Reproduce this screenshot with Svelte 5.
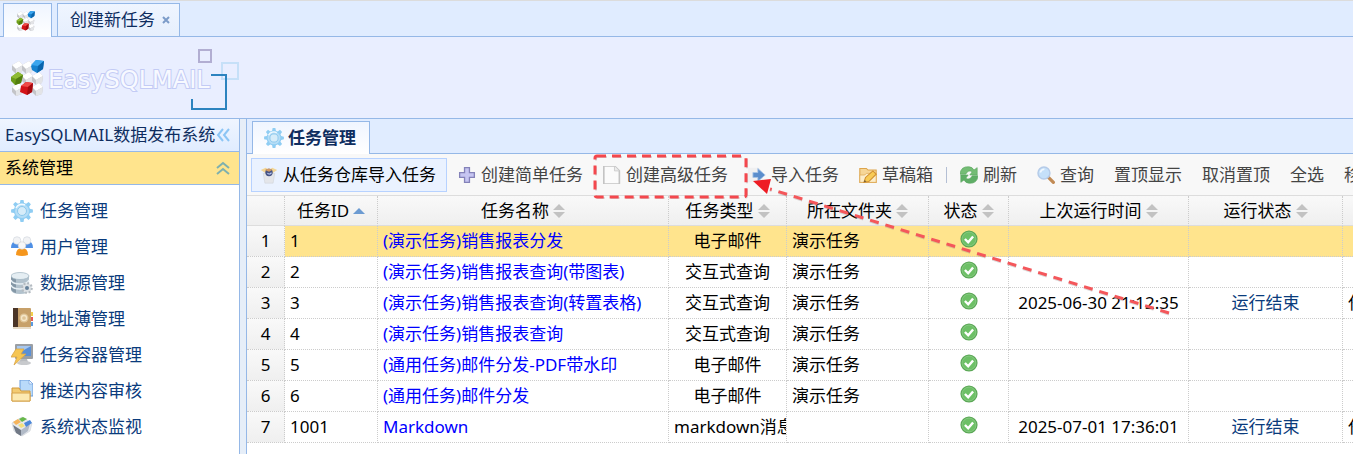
<script lang="ts">
	interface NavItem {
		label: string;
		icon: string;
		href: string;
	}

	interface ToolItem {
		label: string;
		icon?: string;
		raised?: boolean;
		separator?: boolean; // 按钮后面的分隔线
	}

	interface Column {
		title: string;
		width: number;
		sort?: 'asc' | 'both';
	}

	interface Task {
		id: number;
		name: string;
		type: string;
		folder: string;
		lastRun?: string;
		result?: string;
		message?: string;
	}

	// 徽标中的灰色方块
	const cubes = [
		{ x: 1, y: 1 },
		{ x: 11, y: 1 },
		{ x: 11, y: 12 },
		{ x: 21, y: 12 },
		{ x: 1, y: 23 },
		{ x: 21, y: 23 }
	];

	const navItems: NavItem[] = [
		{ label: '任务管理', icon: 'gear', href: '#tasks' },
		{ label: '用户管理', icon: 'users', href: '#users' },
		{ label: '数据源管理', icon: 'database', href: '#sources' },
		{ label: '地址薄管理', icon: 'book', href: '#contacts' },
		{ label: '任务容器管理', icon: 'container', href: '#containers' },
		{ label: '推送内容审核', icon: 'folder', href: '#review' },
		{ label: '系统状态监视', icon: 'monitor', href: '#status' }
	];

	const tools: ToolItem[] = [
		{ label: '从任务仓库导入任务', icon: 'store', raised: true },
		{ label: '创建简单任务', icon: 'plus' },
		{ label: '创建高级任务', icon: 'page' },
		{ label: '导入任务', icon: 'import' },
		{ label: '草稿箱', icon: 'draft', separator: true },
		{ label: '刷新', icon: 'refresh' },
		{ label: '查询', icon: 'search' },
		{ label: '置顶显示' },
		{ label: '取消置顶' },
		{ label: '全选' },
		{ label: '移动' }
	];

	const columns: Column[] = [
		{ title: '', width: 38 },
		{ title: '任务ID', width: 93, sort: 'asc' },
		{ title: '任务名称', width: 291, sort: 'both' },
		{ title: '任务类型', width: 118, sort: 'both' },
		{ title: '所在文件夹', width: 142, sort: 'both' },
		{ title: '状态', width: 80, sort: 'both' },
		{ title: '上次运行时间', width: 180, sort: 'both' },
		{ title: '运行状态', width: 154, sort: 'both' },
		{ title: '', width: 240 }
	];

	const tasks: Task[] = [
		{ id: 1, name: '(演示任务)销售报表分发', type: '电子邮件', folder: '演示任务' },
		{ id: 2, name: '(演示任务)销售报表查询(带图表)', type: '交互式查询', folder: '演示任务' },
		{
			id: 3,
			name: '(演示任务)销售报表查询(转置表格)',
			type: '交互式查询',
			folder: '演示任务',
			lastRun: '2025-06-30 21:12:35',
			result: '运行结束',
			message: '任'
		},
		{ id: 4, name: '(演示任务)销售报表查询', type: '交互式查询', folder: '演示任务' },
		{ id: 5, name: '(通用任务)邮件分发-PDF带水印', type: '电子邮件', folder: '演示任务' },
		{ id: 6, name: '(通用任务)邮件分发', type: '电子邮件', folder: '演示任务' },
		{
			id: 1001,
			name: 'Markdown',
			type: 'markdown消息',
			folder: '',
			lastRun: '2025-07-01 17:36:01',
			result: '运行结束',
			message: '任'
		}
	];

	// 当前选中的行
	let selectedId = $state(1);
</script>

{#snippet logo(size: number)}
	<svg width={size} height={size} viewBox="0 0 34 36" aria-hidden="true">
		{#each cubes as cube}
			<g transform="translate({cube.x} {cube.y})">
				<path d="M0 4l7-4 4 4-1 7-6 2-4-4z" fill="#c3c4c8" />
				<path d="M0 4l7-4 4 4-7 4z" fill="#fff" />
				<path d="M4 8l7-4-1 7-6 2z" fill="#e3e4e7" />
			</g>
		{/each}
		<path d="M20 6l5-6 8 1-1 8-6 4-5-3z" fill="#1582d0" />
		<path d="M20 5l5-5 8 1-6 5z" fill="#3aa5ee" />
		<path d="M27 6l6-5-1 8-6 4z" fill="#0a65ad" />
		<path d="M0 17l7-5 5 3-2 8-6 2-4-4z" fill="#6c9c1a" />
		<path d="M0 17l7-5 5 3-7 4z" fill="#8fbb34" />
		<path d="M5 19l7-4-2 8-6 2z" fill="#537f10" />
		<path d="M10 26l5-4 7 1-1 9-5 3-7-3z" fill="#d31217" />
		<path d="M10 26l5-4 7 1-5 4z" fill="#ee4a47" />
		<path d="M17 27l5-4-1 9-5 3z" fill="#a5090e" />
	</svg>
{/snippet}

{#snippet icon(name: string, size: number)}
	<svg class="icon" width={size} height={size} viewBox="0 0 22 22" aria-hidden="true">
		{#if name === 'gear'}
			<path d="M9.500 0h3l.6 3 2 .8L17.600 2l2.300 2.300-1.800 2.500.8 2 3 .7v3l-3 .6-.8 2 1.800 2.500-2.300 2.300-2.500-1.800-2 .8-.6 3h-3l-.6-3-2-.8-2.500 1.800-2.300-2.300L3.900 15l-.8-2-3-.6v-3l3-.6.8-2-1.800-2.500L4.400 2l2.500 1.800 2-.8z" fill="#8fcdf3" />
			<circle cx="11" cy="11" r="7" fill="#b5ddf6" />
			<circle cx="11" cy="11" r="4.500" fill="#d6ecf9" stroke="#8cc8ec" />
			<path d="M5 8a6.500 6.500 0 0 1 9-3" fill="none" stroke="#f3faff" stroke-width="1.500" />
		{:else if name === 'users'}
			<path d="M0 12q0-7 6-7t6 7zM10 12q0-7 6-7t6 7z" fill="#4e8fe5" />
			<circle cx="6" cy="4.500" r="3.800" fill="#f2f3f5" stroke="#ccd3dc" stroke-width=".6" />
			<circle cx="16" cy="4.500" r="3.800" fill="#f2f3f5" stroke="#ccd3dc" stroke-width=".6" />
			<path d="M5 19q0-7 6-7t6 7q-6 2-12 0z" fill="#f5961d" />
			<circle cx="11" cy="9.500" r="3.800" fill="#f7f7f7" stroke="#d2d2d2" stroke-width=".6" />
		{:else if name === 'database'}
			<path d="M0 4v14q1 4 9 4t9-4V4z" fill="#b2c2cd" />
			<path d="M0 4v13q1 3 5 4V4z" fill="#8497a6" />
			<path d="M0 8q1 4 9 4t9-4M0 13q1 4 9 4t9-4" fill="none" stroke="#e6eff4" stroke-width="1.500" />
			<ellipse cx="9" cy="4" rx="9" ry="3.500" fill="#e5eef3" stroke="#9fb4c2" stroke-width=".7" />
			<circle cx="16" cy="16" r="4.800" fill="#dde2e6" stroke="#b4bbc1" stroke-width="2" stroke-dasharray="2 1.700" />
			<circle cx="16" cy="16" r="2" fill="#65819a" />
		{:else if name === 'book'}
			<path d="M18 4h4v4h-4z" fill="#f2cf4b" />
			<path d="M18 9h4v4h-4z" fill="#e75a55" />
			<path d="M18 14h4v4h-4z" fill="#5a9be0" />
			<rect x="2" width="18" height="21" rx="1" fill="#c7a069" />
			<path d="M2 0h5v21H2z" fill="#4b3527" />
			<circle cx="13" cy="10" r="4.500" fill="#dfc497" />
			<circle cx="13" cy="10" r="2.500" fill="none" stroke="#f5e6c8" stroke-width="1.300" />
			<path d="M2 19h18v2H2z" fill="#e8dcc8" />
		{:else if name === 'container'}
			<rect x="4" width="18" height="15" rx="1" fill="#9b9fa4" />
			<path d="M6 2h14v10H6z" fill="#5b90d6" />
			<path d="M6 2h14L6 10z" fill="#a7c8f0" />
			<path d="M10 15h6l1 3h-9z" fill="#b9bcc0" />
			<ellipse cx="13" cy="19" rx="7" ry="2" fill="#c8cacd" />
			<path d="M5 5h8l-3 5h5L3 21l3-8H0z" fill="#f6c653" stroke="#d9a547" stroke-width=".8" />
		{:else if name === 'folder'}
			<path d="M9 0h9l4 4v12H9z" fill="#b9dafa" stroke="#6b9cdb" />
			<path d="M18 0v4h4z" fill="#edf6ff" stroke="#6b9cdb" stroke-width=".6" />
			<path d="M1 8h7l2 3h9v10H1z" fill="#f3cb72" stroke="#d0993c" />
			<path d="M1 13h18v8H1z" fill="#fce9b1" stroke="#d6a34c" />
		{:else if name === 'monitor'}
			<path d="M1 7l10-6 10 6-2 8-8 5-8-5z" fill="#e6e9ed" stroke="#c9ced5" stroke-width=".6" />
			<path d="M2 9l8 5v6l-5-3z" fill="#717986" />
			<path d="M10 14l9-6-2 7-7 5z" fill="#b1bac7" />
			<path d="M2 6l5-3 3 3-5 3z" fill="#f5b45c" />
			<path d="M8 3l4-2 4 2-5 3z" fill="#67b84a" />
			<path d="M13 7l6-3 2 3-6 4z" fill="#4b87d9" />
			<path d="M7 9l4-2 3 3-4 2z" fill="#f3df7a" />
		{:else if name === 'store'}
			<path d="M4 9h14l-2 12H6z" fill="#e4e6ea" stroke="#d0d3d9" stroke-width=".7" />
			<path d="M1 5l6-3 4 3-4 4zM21 5l-6-3-4 3 4 4z" fill="#f3d694" />
			<circle cx="11" cy="8" r="4.500" fill="#465384" />
			<path d="M6 5q5-4 9 0l-4 2z" fill="#d19b66" />
			<path d="M9 9q3 2 5-1" fill="none" stroke="#b6c5ee" stroke-width="1.500" />
		{:else if name === 'plus'}
			<path d="M8 2h6v6h6v6h-6v6H8v-6H2V8h6z" fill="#c6c5f2" stroke="#8482b9" stroke-width="1.600" />
		{:else if name === 'page'}
			<path d="M1 0h13l6 6v16H1z" fill="#fbfbfb" stroke="#c4c4c4" stroke-width="2" />
			<path d="M14 0v6h6" fill="#ececec" stroke="#c9c9c9" />
		{:else if name === 'import'}
			<path d="M0 2h13l5 5v13H0z" fill="#f0f0f1" />
			<path d="M6 8h6V3l9 8-9 8v-5H6z" fill="#5b8dcc" stroke="#a9c5e8" />
		{:else if name === 'draft'}
			<path d="M1 3h8l2 2h10v15H1z" fill="#f6d697" stroke="#dda44b" stroke-width="1.300" />
			<path d="M1 11h6l2-2h12v11H1z" fill="#fcedc9" stroke="#e0ad5c" />
			<path d="M6 20l2-6 9-8 4 4-9 9z" fill="#f8cb55" stroke="#cf8e2e" stroke-width="1.300" />
			<path d="M6 20l1-3 2 2z" fill="#6b5737" />
		{:else if name === 'refresh'}
			<path d="M0 10q1-10 11-9 4 0 6 4l4-3v9h-9l3-4q-5-3-8 3z" fill="#74bd75" stroke="#5aa660" stroke-width=".8" />
			<path d="M22 12q-1 10-11 9-4 0-6-4l-4 3v-9h9l-3 4q5 3 8-3z" fill="#5fae66" stroke="#5aa660" stroke-width=".8" />
		{:else if name === 'search'}
			<path d="M14 14l6 6" stroke="#c18b55" stroke-width="4" stroke-linecap="round" />
			<circle cx="8.500" cy="8.500" r="7.300" fill="#c5e0f9" stroke="#b5cbe8" stroke-width="1.800" />
			<path d="M4 8q1-4 5-4" fill="none" stroke="#f1f8ff" stroke-width="2" />
		{:else if name === 'ok'}
			<circle cx="11" cy="11" r="10.500" fill="#58a653" />
			<circle cx="11" cy="11" r="8.500" fill="#6dc066" stroke="#8fce8a" />
			<path d="M6 11l4 4 6-7" fill="none" stroke="#fff" stroke-width="3" />
		{/if}
	</svg>
{/snippet}

<div class="page">
	<div class="top-tabs">
		<button class="top-tab active" aria-label="EasySQLMAIL">{@render logo(20)}</button>
		<div class="top-tab">
			<button class="tab-label">创建新任务</button>
			<button class="close" aria-label="关闭">
				<svg width="8" height="8" viewBox="0 0 8 8"><path d="M1 1l6 6M7 1L1 7" stroke="#7d9cc9" stroke-width="2" /></svg>
			</button>
		</div>
	</div>

	<header class="banner">
		{@render logo(36)}
		<span class="brand">EasySQLMAIL</span>
		<svg class="frames" width="50" height="64" viewBox="0 0 50 64" fill="none" aria-hidden="true">
			<path d="M9 2h12v12H9z" stroke="#b2aed2" stroke-width="2" />
			<path d="M32 15h16v16H32z" stroke="#c6e0f8" stroke-width="2" />
			<path d="M21 27h15v34H2V51" stroke="#2c83bf" stroke-width="2" />
		</svg>
	</header>

	<div class="body">
		<aside class="sidebar">
			<div class="side-title">
				<span>EasySQLMAIL数据发布系统</span>
				<button aria-label="收起">
					<svg width="14" height="14" viewBox="0 0 14 14" fill="none"><path d="M7 1L2 7l5 6M13 1L8 7l5 6" stroke="#8cc5f5" stroke-width="2" /></svg>
				</button>
			</div>
			<div class="side-section">
				<span>系统管理</span>
				<button aria-label="折叠">
					<svg width="14" height="14" viewBox="0 0 14 14" fill="none"><path d="M1 7l6-5 6 5M1 13l6-5 6 5" stroke="#7eb0ae" stroke-width="2" /></svg>
				</button>
			</div>
			<nav>
				{#each navItems as item}
					<a href={item.href}>{@render icon(item.icon, 22)}{item.label}</a>
				{/each}
			</nav>
		</aside>

		<main>
			<div class="main-tabs">
				<button class="main-tab">{@render icon('gear', 20)}任务管理</button>
			</div>

			<div class="toolbar">
				{#each tools as tool}
					<button class="tool" class:raised={tool.raised}>
						{#if tool.icon}{@render icon(tool.icon, 18)}{/if}
						{tool.label}
					</button>
					{#if tool.separator}<span class="separator"></span>{/if}
				{/each}
			</div>

			<table>
				<colgroup>
					{#each columns as column}
						<col style="width: {column.width}px" />
					{/each}
				</colgroup>
				<thead>
					<tr>
						{#each columns as column}
							<th>
								{#if column.sort}
									<button class="sort">
										{column.title}
										<svg width="12" height="14" viewBox="0 0 12 14" aria-hidden="true">
											{#if column.sort === 'asc'}
												<path d="M6 4l6 6H0z" fill="#6c9bd2" />
											{:else}
												<path d="M6 0l6 6H0zM6 14l6-6H0z" fill="#c2c2c2" />
											{/if}
										</svg>
									</button>
								{/if}
							</th>
						{/each}
					</tr>
				</thead>
				<tbody>
					{#each tasks as task, i}
						<tr class:selected={task.id === selectedId} onclick={() => (selectedId = task.id)}>
							<td class="number">{i + 1}</td>
							<td>{task.id}</td>
							<td><a class="name" href="#task-{task.id}">{task.name}</a></td>
							<td class="center">{task.type}</td>
							<td>{task.folder}</td>
							<td class="center status">{@render icon('ok', 18)}</td>
							<td class="center">{task.lastRun ?? ''}</td>
							<td class="center">
								{#if task.result}<a class="result" href="#log-{task.id}">{task.result}</a>{/if}
							</td>
							<td>{task.message ?? ''}</td>
						</tr>
					{/each}
				</tbody>
			</table>

			<!-- 指向“创建高级任务”的标注 -->
			<svg class="callout" width="580" height="164" viewBox="0 0 580 164" fill="none" aria-hidden="true">
				<rect x="3" y="3" width="151" height="41" rx="2" stroke="#8a8080" stroke-opacity=".3" stroke-width="2" stroke-dasharray="9 6" />
				<rect x="2" y="2" width="151" height="41" rx="2" stroke="#f4474d" stroke-width="3" stroke-dasharray="9 6" />
				<path d="M576 160L177 36" stroke="#8a8080" stroke-opacity=".3" stroke-width="3" stroke-dasharray="9 7" />
				<path d="M576 159L177 35" stroke="#f4575b" stroke-width="3" stroke-dasharray="9 7" />
				<path d="M160 27l18-2-4 15z" fill="#ee1c24" />
			</svg>
		</main>
	</div>
</div>

<style>
	:global(body) {
		margin: 0;
	}

	.page {
		display: flex;
		flex-direction: column;
		height: 100vh;
		overflow: hidden;
		font-family: 'Noto Sans', 'Noto Sans CJK SC', sans-serif;
		font-size: 17px;
		line-height: 24px;
		color: #000;
		background: #fff;
	}

	button {
		margin: 0;
		padding: 0;
		border: none;
		background: none;
		font: inherit;
		color: inherit;
		white-space: nowrap;
		cursor: pointer;
	}

	a {
		text-decoration: none;
	}

	svg {
		display: block;
		flex: none;
	}

	.top-tabs {
		display: flex;
		gap: 5px;
		height: 33px;
		padding: 2px 3px 0;
		border-top: 1px solid #dcdcdc;
		border-bottom: 1px solid #95b8e7;
		background: #e0ecff;
	}

	.top-tab {
		display: flex;
		align-items: center;
		gap: 7px;
		box-sizing: border-box;
		height: 33px;
		padding: 0 9px 0 12px;
		border: 1px solid #95b8e7;
		border-bottom: none;
		background: linear-gradient(#eff5ff, #e6effd);
		color: #0e2d5f;
	}

	.top-tab.active {
		height: 34px;
		padding: 0 15px 0 12px;
		background: linear-gradient(#eff5ff, #fff);
	}

	.banner {
		position: relative;
		display: flex;
		align-items: center;
		gap: 2px;
		height: 81px;
		padding-left: 10px;
		border-bottom: 1px solid #95b8e7;
		background: #e9eeff;
	}

	.brand {
		padding-top: 4px;
		font-family: 'DejaVu Sans', sans-serif;
		font-size: 24px;
		color: #f7f9ff;
		-webkit-text-stroke: 2px #c3cbf5;
		paint-order: stroke fill;
	}

	.frames {
		position: absolute;
		left: 190px;
		top: 11px;
	}

	.body {
		display: flex;
		flex: 1;
		min-height: 0;
	}

	.sidebar {
		flex: none;
		width: 239px;
		border-right: 1px solid #95b8e7;
	}

	.side-title,
	.side-section {
		display: flex;
		align-items: center;
		justify-content: space-between;
		height: 32px;
		padding: 0 9px 0 5px;
		border-bottom: 1px solid #95b8e7;
	}

	.side-title {
		background: linear-gradient(#eff5ff, #e0ecff);
		color: #0e2d5f;
	}

	.side-section {
		background: #ffe48d;
	}

	nav {
		display: flex;
		flex-direction: column;
		padding-top: 8px;
	}

	nav a {
		display: flex;
		align-items: center;
		gap: 7px;
		height: 36px;
		padding-left: 11px;
		color: #0a3b7c;
	}

	main {
		position: relative;
		flex: 1;
		min-width: 0;
		margin-left: 6px;
		border-left: 1px solid #95b8e7;
		box-shadow: -6px 0 #e6eef8;
		overflow: hidden;
		clip-path: inset(0 0 0 -6px);
	}

	.main-tabs {
		height: 32px;
		padding: 2px 5px 0;
		border-bottom: 1px solid #95b8e7;
		background: #e0ecff;
	}

	.main-tab {
		display: flex;
		align-items: center;
		gap: 4px;
		box-sizing: border-box;
		height: 33px;
		padding: 0 13px 0 11px;
		border: 1px solid #95b8e7;
		border-bottom: none;
		background: linear-gradient(#eff5ff, #fff);
		color: #0e2d5f;
		font-weight: bold;
	}

	.toolbar {
		display: flex;
		align-items: center;
		gap: 2px;
		height: 41px;
		padding-left: 4px;
		border-bottom: 1px solid #ddd;
		background: #f8f8f8;
		overflow: hidden;
	}

	.tool {
		display: flex;
		flex: none;
		align-items: center;
		gap: 5px;
		height: 34px;
		padding: 0 8px;
		border: 1px solid transparent;
		color: #444;
	}

	.tool.raised {
		padding-right: 10px;
		border-color: #b7d2ff;
		background: #eaf2ff;
		color: #000;
	}

	.separator {
		flex: none;
		width: 1px;
		height: 16px;
		margin: 0 2px;
		background: #b4bfd4;
	}

	table {
		width: 1336px;
		table-layout: fixed;
		border-collapse: separate;
		border-spacing: 0;
	}

	th,
	td {
		box-sizing: border-box;
		padding: 0 5px;
		border-right: 1px dotted #ccc;
		overflow: hidden;
		white-space: nowrap;
	}

	th {
		height: 30px;
		border-bottom: 1px solid #ddd;
		background: linear-gradient(#f9f9f9, #efefef);
		font-weight: normal;
	}

	.sort {
		display: flex;
		align-items: center;
		justify-content: center;
		gap: 4px;
		width: 100%;
	}

	td {
		height: 31px;
		border-bottom: 1px dotted #ccc;
	}

	.selected td {
		background: #ffe48d;
	}

	.center {
		text-align: center;
	}

	.number,
	.selected .number {
		background: linear-gradient(#f9f9f9, #efefef);
		text-align: center;
	}

	.status .icon {
		margin: 0 auto 4px;
	}

	.name {
		color: #00f;
	}

	.result {
		color: #0a3b7c;
	}

	.callout {
		position: absolute;
		left: 346px;
		top: 35px;
		pointer-events: none;
	}
</style>
